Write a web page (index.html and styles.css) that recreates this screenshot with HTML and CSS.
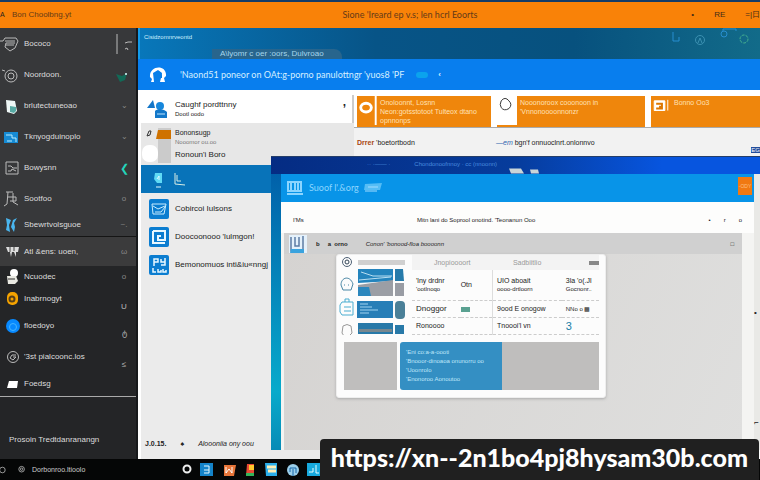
FILE: index.html
```html
<!DOCTYPE html>
<html lang="en">
<head>
<meta charset="utf-8">
<title>Bon Choolong</title>
<link rel="stylesheet" href="styles.css">
</head>
<body>
<header class="titlebar">
  <span class="mark">A</span>
  <span class="app">Bon Choolbng.yt</span>
  <h1>Sione 'Ireard ep v.s; len hcrl Eoorts</h1>
  <span class="tools"><span>•</span><span>RE</span><span>=|日</span></span>
</header>
<main class="desk">
  <nav class="side">
    <a class="item" href="#"><svg viewBox="0 0 20 20"><path d="M0 7h3l2-3h11l2 3-3 7-5 3-5-4 1-4h9M5 7h10M6 11h8" class="line"/></svg><span>Bococo</span><svg class="end" viewBox="0 0 20 20"><path d="M1 0v20M9 9l3-1h4M9 15l2-1 1 2" class="line"/></svg></a>
    <a class="item" href="#"><svg viewBox="0 0 20 20"><path d="M2 5l3 1" class="line"/><circle cx="11" cy="11" r="6" class="line"/><circle cx="11" cy="11" r="3" class="line"/></svg><span>Noordoon.</span><svg class="end" viewBox="0 0 20 20"><path d="M0 9l6 2 5-3-2 7-5 2z" fill="#126957"/><circle cx="10" cy="9" r="1" fill="#dff"/></svg></a>
    <a class="item" href="#"><svg viewBox="0 0 20 20"><path d="M6 4l9 1 2 10-3 3-7-2z" fill="#eef7f6"/><path d="M10 10l6 1v4l-2 2-4-1z" fill="#57aaa4"/></svg><span>brlutectuneoao</span><small>⌄</small></a>
    <a class="item" href="#"><svg viewBox="0 0 20 20"><path d="M4 5h14v11H4z" fill="#168bd4"/><path d="M6 8h6v3h4v4M7 14h5" stroke="#b8ecff" fill="none"/></svg><span>Tknyogduinoplo</span><small>⌄</small></a>
    <a class="item" href="#"><svg viewBox="0 0 20 20"><path d="M6 4h12v12H6zM8 8h3l2 2h4M8 13h3l1-2 4 2" class="line"/></svg><span>Bowysnn</span><small class="teal">❮</small></a>
    <a class="item" href="#"><svg viewBox="0 0 20 20"><path d="M6 3h7M8 3l-1 12-3 2M8 8h8v4h-6M13 4v9l5 3" class="line"/></svg><span>Sootfoo</span><small>o</small></a>
    <a class="item compact" href="#"><svg viewBox="0 0 20 20"><path d="M6 3l5 2-2 5 1 7-4-2 1-5zM17 3l-4 2-2 7 3 5 1-5-1-4z" fill="#4ab6ef"/></svg><span>Sbewrtvolsguoe</span><small>~.</small></a>
    <a class="item active" href="#"><svg viewBox="0 0 20 20"><path d="M6 5h13l-1 5h-2v5l-2-5h-2l-1 5-1-5H8z" fill="#ddd"/><path d="M10 5v5M14 5v4" stroke="#444"/></svg><span>Atl &amp;ens: uoen,</span><small>ω</small></a>
    <a class="item compact" href="#"><svg viewBox="0 0 20 20"><circle cx="14" cy="6" r="4" fill="#fff"/><path d="M7 9h9l2 5-3 3H8z" fill="#e9e9e2"/><path d="M8 12h7" stroke="#333"/></svg><span>Ncuodec</span><small>o</small></a>
    <a class="item compact" href="#"><svg viewBox="0 0 20 20"><rect x="7" y="3" width="11" height="13" rx="5" fill="#f5a300"/><circle cx="12" cy="10" r="2.500" fill="none" stroke="#594018" stroke-width="2"/></svg><span>Inabrnogyt</span><small class="low">U</small></a>
    <a class="item" href="#"><svg viewBox="0 0 20 20"><circle cx="13" cy="10" r="7" fill="#0789ff"/><circle cx="13" cy="11" r="3.500" fill="none" stroke="#45b4ff"/></svg><span>floedoyo</span><small class="low">ტ</small></a>
    <a class="item" href="#"><svg viewBox="0 0 20 20"><circle cx="13" cy="10" r="5.500" class="line"/><path d="M16 8h-4l-2 3 3 2 3-3h-3" class="line"/></svg><span>'3st pialcoonc.los</span><small class="low">≤</small></a>
    <a class="item compact" href="#"><svg viewBox="0 0 20 20"><path d="M9 7h9l-1 7H7z" fill="#fff"/></svg><span>Foedsg</span></a>
    <a class="foot" href="#">Prosoin Tredtdanranangn</a>
  </nav>
  <section class="content">
    <header class="hero"><small>Cisidzomnrveontd</small><span class="tab">A\lyomr c oer :oors, Dulvroao</span>
      <span class="heroicons"><svg viewBox="0 0 80 20"><path d="M3 4v9h6V9M53 3V1h13v2" fill="none" stroke="#278ed0"/><circle cx="30" cy="12" r="4.500" fill="none" stroke="#3c91b2"/><path d="M28 15l2-5 2 5" fill="none" stroke="#3c91b2"/><circle cx="54" cy="6" r="3" fill="none" stroke="#278ed0"/><circle cx="74" cy="11" r="4" fill="none" stroke="#45b090" stroke-dasharray="3 1"/></svg></span>
    </header>
    <div class="band"><svg viewBox="0 0 20 20"><path d="M2 12C1 0 19-1 18 11l-2 2 1 4h-5l1-4 1-5-4-3-5 3 1 9H3l1-3z" fill="#fff"/><path d="M6 10c1-5 7-5 8 0v3h-3v3H8v-3H6z" fill="#087fe8"/></svg><h2>'Naond51 poneor on OAt:g-porno panulottngr 'yuos8 'PF</h2><i></i><b>‹</b></div>
    <div class="panes">
      <aside class="left">
        <div class="profile"><svg viewBox="0 0 20 20"><path d="M0 9l6-8 2 8z" fill="#1476c8"/><circle cx="13" cy="7" r="4" fill="#1687dc"/><path d="M8 12c2-3 10-2 12 1v6H8z" fill="#1378c9"/><path d="M10 15h8" stroke="#bde4ff"/></svg><div><strong>Caughf pordttnny</strong><small>Dootl oodo</small></div><span class="tick">’</span></div>
        <div class="recent">
          <svg viewBox="0 0 30 40"><path d="M17 5h13v35H17z" fill="#cbcbcb"/><path d="M17 7h13v9H15z" fill="#cf7200"/><path d="M8 8l-2 5 3-1 1-4z" fill="none" stroke="#333"/><rect x="1" y="22" width="16" height="17" rx="7" fill="#fff"/></svg>
          <div><b>Bononsugp</b><small>Nooomor ou.oo</small><span>Ronoun'i  Boro</span></div>
        </div>
        <div class="selected"><svg viewBox="0 0 40 20"><path d="M6 4h7v10H8l-3-4z" fill="#5fdaf5"/><path d="M8 10l2-3v4M7 18h5" stroke="#e2fbff" fill="none"/><path d="M26 4v11l10 1M28 6v6h4" stroke="#d9eee5" fill="none"/></svg></div>
        <ul>
          <li><svg viewBox="0 0 20 20"><path d="M3 5h14l-2 10H4zM4 7l5 3 7-3M6 13h6l4-5" fill="none" stroke="#c9edff"/></svg><a href="#">Cobircoi Iulsons</a></li>
          <li><svg viewBox="0 0 20 20"><path d="M4 4h12v9H9V9h3M4 4v12h12" fill="none" stroke="#e8f8ff" stroke-width="2"/></svg><a href="#">Doocoonooo 'lulmgon!</a></li>
          <li><svg viewBox="0 0 20 20"><path d="M5 11V4h4v3H5M12 4v3h4V3v7h-4M4 13v4h3M9 14v3h3v-2M14 14v3h3v-2" fill="none" stroke="#e8f8ff" stroke-width="1.500"/></svg><a href="#">Bemonomuos inti&amp;iu«nngj</a></li>
        </ul>
        <div class="status"><b>J.0.15.</b><span>♠</span><em>Aloooniia ony oou</em></div>
      </aside>
      <section class="right">
        <div class="cards">
          <article class="tile"><svg viewBox="0 0 20 30"><ellipse cx="9" cy="12" rx="5.500" ry="4.500" fill="none" stroke="#fff" stroke-width="3"/><path d="M19 0v30" stroke="#fff" stroke-width="2"/></svg><p>Onoloonnt, Losnn<br>Neon:gotsstotoot Tulteox dtano<br>opnnonps</p></article>
          <article class="tile whiteicon"><svg viewBox="0 0 20 30"><path d="M4 5q4-5 8 0 4 4 0 8-5 3-8-1-2-3 0-7z" fill="none" stroke="#333"/></svg><p>Nooonoroox cooonoon in<br>'Vnnonoooonnonzr</p></article>
          <article class="tile last"><svg viewBox="0 0 20 30"><path d="M3 5h11v10H3zM17 4v11" fill="#fff" stroke="#fff"/><path d="M5 8h6v3H8M5 13h7" stroke="#dd7700" stroke-width="2" fill="none"/></svg><p>Bonno Oo3</p></article>
        </div>
        <div class="links"><span><b>Drrer</b> 'boetortbodn</span><span><i>—em</i> bgn'f onnuoclnrt.onlonnvo</span><mark>EG</mark></div>
      </section>
    </div>
    <section class="window">
      <div class="strip"><span>·· ·—— ·</span><span>Chondonoofnnoy · cc (nnoonn)</span><svg viewBox="0 0 40 16"><path d="M2 11h12l3 5H4zM23 12h8l1 4h-8z" fill="#c9d5d8"/></svg></div>
      <div class="frame">
        <header class="bar"><svg viewBox="0 0 20 20"><path d="M3 4h13v9H3zM2 16h16M6 5v7M10 5v7M13 5v7" fill="none" stroke="#8bd5ff" stroke-width="2"/></svg><h2>Suoof l'.&amp;org</h2><svg viewBox="0 0 20 20"><path d="M2 6l17-1-2 7H1z" fill="#55bdf5"/><path d="M2 13h12M5 9h10" stroke="#a2dcff"/></svg><button>-ODY</button></header>
        <div class="menu"><span>I'Ms</span><span>Mitn lani do Soprool onotind. 'Teonanun Ooo</span><span class="dots"><i>•</i><i>r</i><i>o</i></span></div>
        <div class="workspace">
          <div class="path"><svg viewBox="0 0 20 20"><path d="M1 1h18v18H1z" fill="#e4f1fb"/><path d="M3 3v14h12V2M7 3v9h4V3" fill="none" stroke="#5c7ca5" stroke-width="1.500"/><path d="M3 15h13v4H2z" fill="#3aa3de"/></svg><b>b</b><b>a &nbsp;orno</b><em>Conon' 'bonood-floa boooonn</em><span>□</span></div>
          <article class="sheet">
            <div class="summary">
              <svg class="glyphs" viewBox="0 0 20 80"><g fill="none" stroke="#4b87a5"><circle cx="10" cy="7" r="4.500" stroke="#4e6074"/><circle cx="10" cy="7" r="2" stroke="#345"/><path d="M4 30c0-8 9-10 12-1l-2 6H6zM7 30h1m3 0h1"/><path d="M5 47h11v13H5l-2-3v-7zM8 47v-3h4v3M7 52h7m-7 4h7" stroke="#4badd0"/><path d="M6 71q4-3 8 0l1 7-3 3H7l-2-3z" stroke="#999"/></g></svg>
              <svg class="thumbs" viewBox="0 0 48 80"><path d="M1 5h47v5H1z" fill="#d0d0d0"/><path d="M1 14h35v12L1 28z" fill="#2484bd"/><path d="M4 17l12 4h19M2 25l32-3" stroke="#b9dff2" fill="none"/><path d="M1 30l35-5v16H1z" fill="#9b9ea5"/><path d="M1 32h11l2 9H1z" fill="#2c87bd"/><path d="M38 14h8l1 12h-9z" fill="#267aaa"/><path d="M38 28h9v13h-9z" fill="#999ca4"/><path d="M0 46h36v17H0z" fill="#277eb7"/><rect x="38" y="46" width="10" height="18" rx="4" fill="#4b8098"/><path d="M3 49h8M3 52h12M3 55h18M3 58h9" stroke="#a2d4f1"/><path d="M1 68h35v11H1zM38 70h9v9h-9z" fill="#2879a8"/><path d="M2 74h33v3H2z" fill="#77878f"/></svg>
              <table>
                <colgroup><col class="name"><col class="value"><col class="detail"><col></colgroup>
                <thead><tr><th colspan="2">Jnopioooort</th><th>Sadbiitlio</th><th><i></i></th></tr></thead>
                <tbody>
                  <tr><td><b>'lny drdnr</b><small>'ootlnoqo</small></td><td>Otn</td><td><b>UIO aboait</b><small>oooo-drtloorn</small></td><td><b>3la 'o(.Jl</b><small>Gocnonr..</small></td></tr>
                  <tr><td class="big">Dnoggor</td><td><mark></mark></td><td><b>9ood E onogow</b></td><td><small>NNo o ▩</small></td></tr>
                  <tr><td>Ronoooo</td><td></td><td>Tnoooi'l vn</td><td class="number">3</td></tr>
                </tbody>
              </table>
            </div>
            <div class="preview"><div></div><p>'Eni co:a-a-oooti<br>'Bnooor-dinoaoa onunorru oo<br>'Uoonrolo<br>'Enonoroo Aonoutoo</p><div></div></div>
          </article>
        </div>
      </div>
      <div class="edge"><span>•</span><span>⌐</span></div>
    </section>
  </section>
</main>
<footer class="task">
  <div class="start"><svg viewBox="0 0 20 20"><circle cx="3" cy="10" r="3.500" class="line"/></svg><svg viewBox="0 0 20 20"><circle cx="7" cy="9" r="3.500" class="line"/><circle cx="7" cy="9" r="1.500" class="line"/></svg><span>Dorbonroo.ltioolo</span></div>
  <svg viewBox="0 0 170 20"><circle cx="11" cy="9" r="3.500" stroke="#eee" stroke-width="2" fill="none"/><path d="M24 3h13v13H24z" fill="#1483c9"/><path d="M28 6h5v7h-5M28 10h5" fill="none" stroke="#e7faff"/><path d="M48 5h12l-2 11H48z" fill="#e77539"/><path d="M50 7v6l3-4 3 4V7" fill="none" stroke="#fff"/><path d="M71 4h7v12h-8z" fill="#e84835"/><path d="M73 5h5v5h-5z" fill="#ffc72c"/><path d="M70 13h8v3h-8z" fill="#34b45a"/><path d="M89 3h12v13H90z" fill="#2aaeea"/><path d="M91 7h9M92 11h8" stroke="#ffefb5" stroke-width="3"/><circle cx="117" cy="10" r="6" fill="#9bcfea"/><path d="M114 12V8h6v5M117 9v7" stroke="#1767aa" fill="none"/><path d="M131 3h13v13h-13z" fill="#17a9dd"/><path d="M133 12h4V8m3-3v8h3" stroke="#eaffff" fill="none"/></svg>
</footer>
<div class="address">https://xn--2n1bo4pj8hysam30b.com</div>
</body>
</html>
```
FILE: styles.css
```css
* { box-sizing: border-box; }
body { margin: 0; min-height: 100vh; display: flex; flex-direction: column; overflow: hidden; font: 8px/10px "Liberation Sans", sans-serif; color: #222; background: #000; }
h1, h2, p, ul { margin: 0; padding: 0; font-weight: 400; }
h1, h2 { font-family: Lato, sans-serif; }
a { color: inherit; text-decoration: none; }
svg { width: 20px; height: 20px; flex: none; }
.line { fill: none; stroke: #bbb; stroke-width: 1; }
.titlebar { height: 28px; flex: none; border-top: 2px solid #143c68; background: #f98208; color: #653a18; display: grid; grid-template-columns: 12px 1fr auto 1fr; align-items: center; }
.mark { font-size: 7px; color: #222; }
.app { font-size: 8px; }
.titlebar h1 { font-size: 9px; line-height: 16px; padding-left: 48px; }
.tools { justify-self: end; display: flex; gap: 20px; color: #432b17; white-space: nowrap; }
.desk { flex: 1; display: grid; grid-template-columns: 138px minmax(0, 1fr); min-height: 0; }
.side { background: #242527; color: #ddd; display: flex; flex-direction: column; border-right: 2px solid #17191b; }
.item { height: 31px; flex: none; display: flex; align-items: center; background: #37383a; font-size: 8px; }
.item > span { margin-left: 4px; flex: 1; white-space: nowrap; }
.item > small { width: 24px; font-size: 8px; color: #888; text-align: center; }
.item .teal { color: #24d4bb; font-size: 11px; }
.item .low { color: #bbb; padding-top: 16px; }
.compact { height: 22px; }
.active { height: 30px; border-top: 1px solid #151515; background: #3b3b3c; }
.active ~ .item { background: #242527; }
.item:nth-last-child(2) { border-bottom: 1px solid #aaa; height: 25px; }
.foot { margin: auto 0 14px 9px; }
.content { position: relative; display: flex; flex-direction: column; min-width: 0; background: #eee; }
.hero { height: 31px; flex: none; display: grid; grid-template-columns: 72px 1fr auto; background: linear-gradient(90deg, #0877ba, #075487 38%, #07517e 70%, #126b89); border-left: 2px solid #129bea; color: #a5d5ec; }
.hero > small { font-size: 6px; padding: 5px 4px; color: #d1f0ff; }
.tab { align-self: end; justify-self: start; padding: 0 18px 0 8px; background: #28658d; border-radius: 0 8px 0 0; }
.heroicons { padding-right: 10px; }
.heroicons svg { width: 80px; }
.band { height: 31px; flex: none; background: #087eee; display: flex; align-items: center; padding-left: 10px; color: #d5efff; }
.band h2 { margin-left: 12px; font-size: 9px; line-height: 20px; }
.band i { width: 12px; height: 6px; background: #0ba3ed; border-radius: 3px; margin: 0 10px 0 12px; }
.panes { flex: 1; display: grid; grid-template-columns: 213px minmax(0, 1fr); border-left: 3px solid #fff; border-top: 5px solid #fff; }
.left { display: flex; flex-direction: column; background: #ebebeb; }
.profile { height: 28px; display: flex; align-items: center; gap: 8px; padding: 0 6px; background: #fff; border-right: 2px solid #ccc; }
.profile div { flex: 1; }
.profile strong, .profile small { display: block; }
.profile strong { font-size: 8px; font-weight: 400; }
.tick { font-size: 12px; font-weight: 700; }
small { font-size: 6px; line-height: 8px; }
.recent { height: 42px; display: flex; background: #e7e7e7; }
.recent svg { width: 30px; height: 40px; }
.recent div { padding: 5px 4px; }
.recent b, .recent small { display: block; font-weight: 400; }
.recent b { font-size: 7px; }
.recent small { margin-bottom: 4px; color: #777; }
.selected { height: 28px; background: #0873b9; padding: 4px 8px; }
.selected svg { width: 40px; }
.left ul { padding: 6px 8px; list-style: none; display: grid; gap: 8px; }
.left li { display: flex; align-items: center; gap: 6px; }
.left li svg { background: #0b7dd0; border-radius: 2px; }
.status { margin-top: auto; padding: 0 4px 10px; display: flex; gap: 14px; font-size: 7px; }
.cards { height: 32px; display: grid; grid-template-columns: 134px 148px 1fr; gap: 6px; background: #fff; padding: 0 0 2px 3px; border-bottom: 1px solid #aaa; }
.tile { background: #ef860c; color: #ffe1b5; display: flex; font-size: 7px; line-height: 9px; min-width: 0; }
.tile svg { height: 29px; }
.tile p { padding: 2px 3px; white-space: nowrap; }
.whiteicon svg { background: #fff; }
.links { height: 30px; display: grid; grid-template-columns: 139px 1fr auto; align-items: center; background: #f2f2f2; padding-left: 3px; font-size: 7px; }
.right { padding-top: 1px; background: #fff; }
.links b { color: #a74711; font-size: 7px; }
.links i { color: #3165af; }
.links mark { color: #fff; background: #234d9b; font-size: 6px; line-height: 6px; margin-top: 14px; }
.window { position: absolute; left: 133px; top: 128px; right: 0; bottom: 9px; padding-left: 10px; background: linear-gradient(#005ba7, #08aacb 80%, #078bb6); border-top: 1px solid #253e69; display: grid; grid-template-rows: 17px minmax(0, 1fr); grid-template-columns: minmax(0, 1fr) 6px; }
.strip { grid-column: 1 / 3; margin-left: -10px; padding-left: 96px; display: flex; gap: 24px; background: linear-gradient(90deg, #052c83, #063c9c 50%, #0755df 80%); color: #4a8cdf; font-size: 6px; line-height: 15px; }
.strip svg { width: 40px; height: 17px; margin-left: -14px; }
.frame { display: flex; flex-direction: column; background: #f4f4f2; min-width: 0; }
.bar { height: 28px; flex: none; display: flex; align-items: center; gap: 4px; padding-left: 4px; background: #0894e8; color: #8cd6ff; }
.bar h2 { font-size: 9px; line-height: 16px; }
.bar button { margin-left: auto; align-self: start; margin-right: 2px; margin-top: 3px; width: 14px; height: 18px; padding: 0; border: 0; background: #f07912; color: #ffc080; font: 5px/10px "Liberation Sans", sans-serif; }
.menu { height: 31px; flex: none; display: grid; grid-template-columns: 124px 1fr auto; align-items: center; padding: 4px 12px 0; background: #fdfdfc; font-size: 6px; }
.dots { display: flex; gap: 13px; }
.dots i { font-style: normal; }
.workspace { flex: 1; margin: 0 12px 0 3px; background: linear-gradient(115deg, #d5d3d1, #dfdfde); }
.path { height: 21px; display: flex; align-items: center; gap: 8px; padding-left: 4px; background: #d0d0d0; font-size: 6px; }
.path em { margin-left: 10px; }
.path > span { margin-left: auto; padding-right: 8px; }
.sheet { width: 59%; min-width: 270px; margin-left: 52px; padding: 0 6px 7px 0; background: #fcfcfc; border: 1px solid #eee; border-radius: 3px; box-shadow: 0 1px 3px #aaa; }
.summary { display: flex; height: 80px; }
.glyphs, .thumbs { height: 80px; }
.thumbs { width: 48px; }
table { flex: 1; width: 0; margin-left: 7px; border-collapse: collapse; table-layout: fixed; font-size: 7px; line-height: 8px; }
.name { width: 26%; }
.value { width: 17%; }
.detail { width: 37%; }
th { height: 15px; padding: 0; font-weight: 400; color: #999; background: #f3f3f3; }
th i { display: block; width: 10px; height: 4px; margin-left: auto; background: #888; }
td { padding: 0 4px; border-bottom: 1px dashed #ccc; white-space: nowrap; vertical-align: middle; }
td:nth-child(2) { border-right: 1px solid #ddd; padding: 0; }
td small, td b { display: block; font-weight: 400; }
td mark { display: block; width: 9px; height: 5px; background: #5aa191; }
.big { font-size: 8px; }
.number { color: #187da6; font-size: 11px; }
.preview { height: 48px; margin: 7px 0 0 7px; display: grid; grid-template-columns: 53px 105px 1fr; }
.preview div { background: #bfbebd; }
.preview p { margin-left: 3px; padding: 6px; background: #348fc3; border-radius: 3px 0 0 3px; color: #bfe7fa; font-size: 6px; line-height: 9px; white-space: nowrap; }
.edge { background: #e9e9e6; display: flex; flex-direction: column; justify-content: end; gap: 100px; padding-bottom: 22px; color: #222; }
.task { height: 21px; flex: none; background: #050606; color: #ccc; display: grid; grid-template-columns: 176px 1fr; align-items: center; font-size: 7px; }
.start { display: flex; align-items: center; }
.start svg { width: 16px; }
.task > svg { width: 170px; }
.address { position: fixed; right: 1px; bottom: 0; height: 41px; padding: 0 11px; border-radius: 4px 4px 0 0; background: #202020; color: #fff; font: 900 25px/36px Lato, sans-serif; white-space: nowrap; }
```
